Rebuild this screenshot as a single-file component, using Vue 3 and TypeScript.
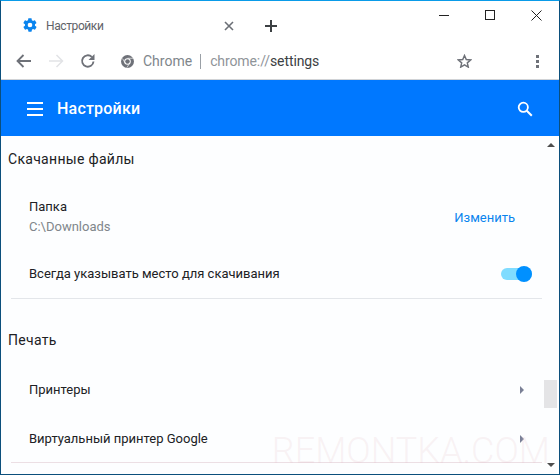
<script setup lang="ts">
const rows = ['Принтеры', 'Виртуальный принтер Google']
</script>

<template>
  <div class="window">
    <div class="tabstrip">
      <div class="tab">
        <svg class="favicon" width="16" height="16" viewBox="0 0 24 24">
          <path fill="#0a84ee" d="M19.4 13c.04-.3.1-.7.1-1s-.03-.7-.1-1l2.1-1.6c.2-.15.25-.4.1-.65l-2-3.5c-.1-.2-.4-.3-.6-.2l-2.5 1c-.5-.4-1.1-.7-1.7-1l-.4-2.6c0-.25-.2-.45-.5-.45h-4c-.25 0-.45.2-.5.45l-.4 2.6c-.6.25-1.15.6-1.7 1l-2.5-1c-.2-.1-.5 0-.6.2l-2 3.5c-.1.2-.1.5.1.65L4.5 11c-.05.3-.1.7-.1 1s.03.7.1 1l-2.1 1.6c-.2.15-.25.4-.1.65l2 3.5c.1.2.4.3.6.2l2.5-1c.5.4 1.1.7 1.7 1l.4 2.6c.05.25.25.45.5.45h4c.25 0 .45-.2.5-.45l.4-2.6c.6-.25 1.15-.6 1.7-1l2.5 1c.2.1.5 0 .6-.2l2-3.5c.1-.2.1-.5-.1-.65L19.4 13zM12 15.5a3.5 3.5 0 1 1 0-7 3.500 3.500 0 0 1 0 7z"/>
        </svg>
        <span class="tab-title">Настройки</span>
        <svg class="tab-close" width="10" height="10" viewBox="0 0 10 10">
          <path d="M1 1l8 8M9 1l-8 8" stroke="#6b6f76" stroke-width="1.6" fill="none"/>
        </svg>
      </div>
      <svg class="new-tab" width="12" height="12" viewBox="0 0 12 12">
        <path d="M6 0v12M0 6h12" stroke="#3c4043" stroke-width="2" fill="none"/>
      </svg>
      <div class="win-controls">
        <svg width="46" height="14" viewBox="0 0 46 14"><path d="M13 7.500h10" stroke="#222" stroke-width="1"/></svg>
        <svg width="46" height="14" viewBox="0 0 46 14"><rect x="13.500" y="2.500" width="9" height="9" fill="none" stroke="#222"/></svg>
        <svg width="46" height="14" viewBox="0 0 46 14"><path d="M13.500 2.500l10 10M23.500 2.500l-10 10" stroke="#222" fill="none"/></svg>
      </div>
    </div>

    <div class="toolbar">
      <svg class="nav" width="16" height="14" viewBox="0 0 16 14"><path d="M15 7H2M7.500 1L1.500 7l6 6" stroke="#6e7178" stroke-width="1.800" fill="none"/></svg>
      <svg class="nav" width="16" height="14" viewBox="0 0 16 14"><path d="M1 7h13M8.500 1l6 6-6 6" stroke="#e2e3e6" stroke-width="1.500" fill="none"/></svg>
      <svg class="nav reload" width="16" height="16" viewBox="0 0 16 16">
        <path d="M13.500 8.500A5.700 5.700 0 1 1 11.800 3.900" stroke="#6e7178" stroke-width="1.900" fill="none"/>
        <path d="M14.500 1v6h-6z" fill="#6e7178"/>
      </svg>
      <svg class="chrome-icon" width="13" height="13" viewBox="0 0 24 24">
        <circle cx="12" cy="12" r="12" fill="#6e7178"/>
        <circle cx="12" cy="12" r="6" fill="#fff"/>
        <circle cx="12" cy="12" r="4.200" fill="#6e7178"/>
        <path d="M12 6h10.500M8 15.500L2.800 6.500M16 15L10.800 23.500" stroke="#fff" stroke-width="1.200"/>
      </svg>
      <span class="origin">Chrome</span>
      <span class="url-sep"></span>
      <span class="url"><span class="url-dim">chrome://</span>settings</span>
      <svg class="star" width="15" height="14" viewBox="0 0 24 23">
        <path d="M12 2.500l2.900 6.600 7.100.7-5.400 4.700 1.600 7-6.200-3.700-6.200 3.700 1.600-7L2 9.800l7.100-.7z" fill="none" stroke="#6e7178" stroke-width="2.400"/>
      </svg>
      <div class="menu-dots"><i></i><i></i><i></i></div>
    </div>

    <header class="appbar">
      <div class="burger"><i></i><i></i><i></i></div>
      <span class="appbar-title">Настройки</span>
      <svg class="search" width="16" height="16" viewBox="0 0 16 16">
        <circle cx="6.300" cy="6.300" r="4.600" fill="none" stroke="#fff" stroke-width="1.800"/>
        <path d="M9.800 9.800l5 5" stroke="#fff" stroke-width="2"/>
      </svg>
    </header>

    <div class="body">
      <main class="content">
        <h2 class="section first">Скачанные файлы</h2>
        <div class="row folder">
          <div>
            <div class="label">Папка</div>
            <div class="sub">C:\Downloads</div>
          </div>
          <span class="link">Изменить</span>
        </div>
        <div class="row ask">
          <span class="label">Всегда указывать место для скачивания</span>
          <span class="toggle"><i></i></span>
        </div>
        <div class="divider"></div>
        <h2 class="section">Печать</h2>
        <div v-for="r in rows" :key="r" class="row nav-row">
          <span class="label">{{ r }}</span>
          <span class="arrow"></span>
        </div>
        <div class="divider last"></div>
      </main>
      <div class="scrollbar">
        <span class="sb-up"></span>
        <span class="sb-thumb"></span>
        <span class="sb-down"></span>
      </div>
      <div class="watermark">REMONTKA.COM</div>
    </div>
  </div>
</template>

<style scoped>
.window {
  width: 560px;
  height: 475px;
  box-sizing: border-box;
  border: 1px solid #0b4f7c;
  border-top-color: #0a9be8;
  display: flex;
  flex-direction: column;
  background: #fff;
  font-family: Roboto, "Noto Sans", sans-serif;
  overflow: hidden;
}
.tabstrip {
  height: 41px;
  display: flex;
  align-items: flex-start;
  flex: none;
}
.tab {
  width: 232px;
  height: 41px;
  display: flex;
  align-items: center;
  padding: 8px 0 0 21px;
  box-sizing: border-box;
}
.favicon {
  margin-top: -1px;
}
.tab-title {
  margin-left: 8px;
  font-size: 12px;
  letter-spacing: -0.4px;
  color: #5f6368;
  flex: 1;
}
.tab-close {
  margin-right: -1px;
}
.new-tab {
  margin: 19px 0 0 32px;
}
.win-controls {
  margin-left: auto;
  margin-top: 7px;
  display: flex;
  margin-right: -5px;
}
.toolbar {
  height: 36px;
  padding: 1px 0 0 15px;
  flex: none;
  display: flex;
  align-items: center;
  border-bottom: 1px solid #d5d7da;
}
.nav + .nav {
  margin-left: 16px;
}
.reload {
  margin-left: 16px;
}
.chrome-icon {
  margin-left: 25px;
}
.origin {
  margin-left: 9px;
  font-size: 14px;
  color: #80868b;
}
.url-sep {
  width: 1px;
  height: 15px;
  background: #9aa0a6;
  margin: 0 9px 0 8px;
}
.url {
  font-size: 14px;
  letter-spacing: -0.1px;
  color: #3c4043;
}
.url-dim {
  color: #8f9499;
}
.star {
  margin-left: auto;
  margin-right: 64px;
}
.menu-dots {
  display: flex;
  flex-direction: column;
  gap: 2px;
  margin-right: 20px;
}
.menu-dots i {
  display: block;
  width: 3px;
  height: 3px;
  background: #6e7178;
}
.appbar {
  height: 55px;
  padding: 1px 26px 0;
  flex: none;
  background: #0078ff;
  display: flex;
  align-items: center;
  color: #fff;
  box-shadow: 0 1px 2px rgba(0, 0, 0, 0.25);
  position: relative;
}
.burger {
  display: flex;
  flex-direction: column;
  gap: 4px;
}
.burger i {
  display: block;
  width: 16px;
  height: 2px;
  background: #fff;
}
.appbar-title {
  margin-left: 14px;
  font-size: 16px;
  font-weight: 500;
  letter-spacing: 0.2px;
}
.search {
  margin-left: auto;
}
.body {
  flex: 1;
  display: flex;
  position: relative;
  min-height: 0;
  background: #fdfeff;
}
.content {
  flex: 1;
  min-width: 0;
  padding-left: 7px;
}
.section {
  margin: 0;
  font-size: 14px;
  font-weight: 400;
  color: #202124;
  line-height: 16px;
  letter-spacing: 0.3px;
}
.section.first {
  margin-top: 15px;
}
.section:not(.first) {
  margin-top: 33px;
}
.row {
  display: flex;
  align-items: center;
  justify-content: space-between;
  padding: 0 10px 0 21px;
}
.folder {
  margin-top: 30px;
  height: 40px;
}
.ask {
  margin-top: 27px;
  height: 20px;
}
.label {
  font-size: 13px;
  line-height: 16px;
  color: #202124;
}
.sub {
  font-size: 13px;
  line-height: 16px;
  margin-top: 4px;
  color: #80868b;
}
.link {
  font-size: 13px;
  color: #0a84ee;
  margin-right: 17px;
}
.toggle {
  width: 31px;
  height: 16px;
  position: relative;
  display: block;
}
.toggle::before {
  content: '';
  position: absolute;
  left: 0;
  right: 0;
  top: 2px;
  height: 12px;
  border-radius: 6px;
  background: #80dcff;
}
.toggle i {
  position: absolute;
  right: 0;
  top: 0;
  width: 16px;
  height: 16px;
  border-radius: 50%;
  background: #0090ff;
}
.divider {
  height: 1px;
  background: #e3e6ea;
  margin: 14px 0 0 3px;
}
.nav-row {
  height: 49px;
}
.nav-row .arrow {
  margin-right: 8px;
}
.section + .nav-row {
  margin-top: 17px;
}
.divider.last {
  margin-top: -1px;
  background: #ecdfe4;
}
.arrow {
  width: 0;
  height: 0;
  border-left: 4px solid #7a8096;
  border-top: 4px solid transparent;
  border-bottom: 4px solid transparent;
}
.scrollbar {
  width: 17px;
  flex: none;
  position: relative;
  display: flex;
  flex-direction: column;
  align-items: center;
}
.sb-up {
  margin-top: 7px;
  border-left: 4px solid transparent;
  border-right: 4px solid transparent;
  border-bottom: 4px solid #4d4d4d;
}
.sb-thumb {
  width: 13px;
  height: 28px;
  background: #e4e4e6;
  margin-top: 233px;
}
.sb-down {
  margin-top: auto;
  margin-bottom: 7px;
  border-left: 4px solid transparent;
  border-right: 4px solid transparent;
  border-top: 4px solid #4d4d4d;
}
.watermark {
  position: absolute;
  right: 9px;
  bottom: 5px;
  font-size: 36px;
  line-height: 1;
  font-weight: 300;
  color: rgba(230, 190, 200, 0.2);
  pointer-events: none;
  white-space: nowrap;
}
</style>
